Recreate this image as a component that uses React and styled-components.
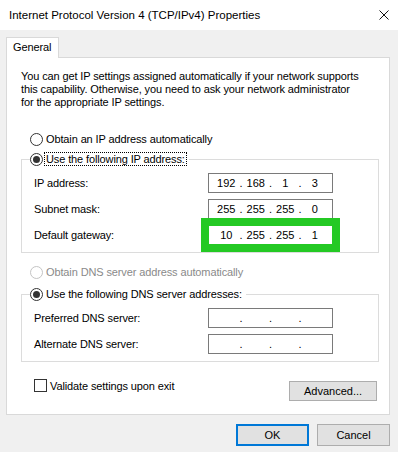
import React from "react";
import styled, { createGlobalStyle, css } from "styled-components";

const GlobalStyle = createGlobalStyle`
  html, body { margin: 0; padding: 0; }
  body {
    background: #f0f0f0;
    font-family: "Liberation Sans", Arial, sans-serif;
    font-size: 11px;
    letter-spacing: -0.12px;
    color: #000;
  }
  * { box-sizing: border-box; }
`;

const Window = styled.div`
  width: 398px;
  height: 452px;
  background: #f0f0f0;
  overflow: hidden;
  display: flex;
  flex-direction: column;
`;

const TitleBar = styled.div`
  height: 30px;
  background: #fff;
  display: flex;
  align-items: center;
  justify-content: space-between;
  padding: 0 9px 0 9px;
`;

const Title = styled.span`
  font-size: 11.5px;
  letter-spacing: 0;
`;

const CloseButton = styled.span`
  display: flex;
  width: 10px;
  height: 10px;
`;

const Body = styled.div`
  padding: 7px 8px 0 6px;
  display: flex;
  flex-direction: column;
`;

const TabStrip = styled.div`
  display: flex;
`;

const Tab = styled.div`
  position: relative;
  z-index: 1;
  width: 53px;
  height: 21px;
  margin-bottom: -1px;
  padding-left: 6px;
  line-height: 19px;
  background: #fff;
  border: 1px solid #d9d9d9;
  border-bottom: none;
`;

const Panel = styled.div`
  background: #fff;
  border: 1px solid #d9d9d9;
  padding: 12px 10px 13px 14px;
  display: flex;
  flex-direction: column;
`;

const Description = styled.p`
  margin: 0;
  line-height: 13px;
  white-space: nowrap;
`;

const RadioRow = styled.div`
  display: flex;
  align-items: center;
  height: 14px;
  margin-left: 9px;
  margin-top: ${(p) => p.$gap}px;
  color: ${(p) => (p.$disabled ? "#8a8a8a" : "#000")};
`;

const RadioCircle = styled.span`
  width: 13px;
  height: 13px;
  flex: none;
  border-radius: 50%;
  border: 1px solid ${(p) => (p.$disabled ? "#c4c4c4" : "#333")};
  background: #fff;
  display: flex;
  align-items: center;
  justify-content: center;
  &::after {
    content: "";
    display: ${(p) => (p.$checked ? "block" : "none")};
    width: 7px;
    height: 7px;
    border-radius: 50%;
    background: #333;
  }
`;

const OptionText = styled.span`
  margin-left: 1px;
  padding: 0 1px;
  height: 14px;
  line-height: 12px;
  border: 1px dotted ${(p) => (p.$focused ? "#000" : "transparent")};
  white-space: nowrap;
`;

const Group = styled.fieldset`
  margin: ${(p) => p.$gap}px 0 0 0;
  padding: 7px 0 ${(p) => p.$bottom}px 0;
  border: 1px solid #dcdcdc;
  min-width: 0;
`;

const Legend = styled.legend`
  padding: 0 2px 0 0;
  margin-left: 8px;
  height: 14px;
  display: flex;
  align-items: center;
`;

const FieldGrid = styled.div`
  display: grid;
  grid-template-columns: 174px 125px;
  row-gap: 6px;
  align-items: center;
  padding-left: 12px;
`;

const FieldLabel = styled.span`
  white-space: nowrap;
`;

const FieldSlot = styled.div`
  position: relative;
  width: 125px;
  height: 20px;
`;

const IpBox = styled.div`
  width: 125px;
  height: 20px;
  border: 1px solid #7a7a7a;
  background: #fff;
  display: flex;
  align-items: center;
  padding-left: 5px;
  letter-spacing: 0;
`;

const Octet = styled.span`
  width: 24.5px;
  text-align: center;
`;

const Dot = styled.span`
  width: 5px;
  text-align: center;
`;

const Highlight = styled.div`
  position: absolute;
  left: -7px;
  right: -7px;
  top: -7px;
  bottom: -7px;
  border: 8px solid #24c924;
  pointer-events: none;
`;

const OptionsRow = styled.div`
  margin-top: 17px;
  margin-right: 2px;
  display: flex;
  justify-content: space-between;
  align-items: flex-start;
`;

const CheckLabel = styled.label`
  display: flex;
  align-items: center;
  height: 13px;
  margin-left: 13px;
  gap: 3px;
`;

const CheckBox = styled.span`
  width: 13px;
  height: 13px;
  border: 1px solid #333;
  background: #fff;
`;

const Button = styled.button`
  font: inherit;
  letter-spacing: 0;
  color: #000;
  background: #e1e1e1;
  border: ${(p) => (p.$default ? "2px solid #0078d7" : "1px solid #adadad")};
  width: ${(p) => p.$width}px;
  height: ${(p) => p.$height}px;
  margin-top: ${(p) => p.$top || 0}px;
  padding: 0;
  border-radius: 0;
`;

const Footer = styled.div`
  display: flex;
  justify-content: flex-end;
  gap: 8px;
  padding-top: 9px;
`;

function IpField({ value, highlight }) {
  const parts = value ? value.split(".") : ["", "", "", ""];
  return (
    <FieldSlot>
      <IpBox>
        {parts.map((p, i) => (
          <React.Fragment key={i}>
            <Octet>{p}</Octet>
            {i < 3 && <Dot>.</Dot>}
          </React.Fragment>
        ))}
      </IpBox>
      {highlight && <Highlight />}
    </FieldSlot>
  );
}

function Radio({ checked, disabled, focused, children, gap }) {
  return (
    <RadioRow $gap={gap} $disabled={disabled}>
      <RadioCircle $checked={checked} $disabled={disabled} />
      <OptionText $focused={focused}>{children}</OptionText>
    </RadioRow>
  );
}

export default function App() {
  return (
    <>
      <GlobalStyle />
      <Window>
        <TitleBar>
          <Title>Internet Protocol Version 4 (TCP/IPv4) Properties</Title>
          <CloseButton>
            <svg width="10" height="10" viewBox="0 0 10 10">
              <path d="M0.5 0.5 L9.5 9.5 M9.5 0.5 L0.5 9.5" stroke="#111" strokeWidth="1" fill="none" />
            </svg>
          </CloseButton>
        </TitleBar>
        <Body>
          <TabStrip>
            <Tab>General</Tab>
          </TabStrip>
          <Panel>
            <Description>
              You can get IP settings assigned automatically if your network supports
              <br />
              this capability. Otherwise, you need to ask your network administrator
              <br />
              for the appropriate IP settings.
            </Description>

            <Radio gap={23}>Obtain an IP address automatically</Radio>

            <Group $gap={6} $bottom={7}>
              <Legend>
                <RadioCircle $checked />
                <OptionText $focused>Use the following IP address:</OptionText>
              </Legend>
              <FieldGrid>
                <FieldLabel>IP address:</FieldLabel>
                <IpField value="192.168.1.3" />
                <FieldLabel>Subnet mask:</FieldLabel>
                <IpField value="255.255.255.0" />
                <FieldLabel>Default gateway:</FieldLabel>
                <IpField value="10.255.255.1" highlight />
              </FieldGrid>
            </Group>

            <Radio gap={12} disabled>
              Obtain DNS server address automatically
            </Radio>

            <Group $gap={8} $bottom={7}>
              <Legend>
                <RadioCircle $checked />
                <OptionText>Use the following DNS server addresses:</OptionText>
              </Legend>
              <FieldGrid>
                <FieldLabel>Preferred DNS server:</FieldLabel>
                <IpField />
                <FieldLabel>Alternate DNS server:</FieldLabel>
                <IpField />
              </FieldGrid>
            </Group>

            <OptionsRow>
              <CheckLabel>
                <CheckBox />
                <span>Validate settings upon exit</span>
              </CheckLabel>
              <Button $width={88} $height={20} $top={2}>
                Advanced...
              </Button>
            </OptionsRow>
          </Panel>
          <Footer>
            <Button $default $width={73} $height={22}>
              OK
            </Button>
            <Button $width={73} $height={22}>
              Cancel
            </Button>
          </Footer>
        </Body>
      </Window>
    </>
  );
}
